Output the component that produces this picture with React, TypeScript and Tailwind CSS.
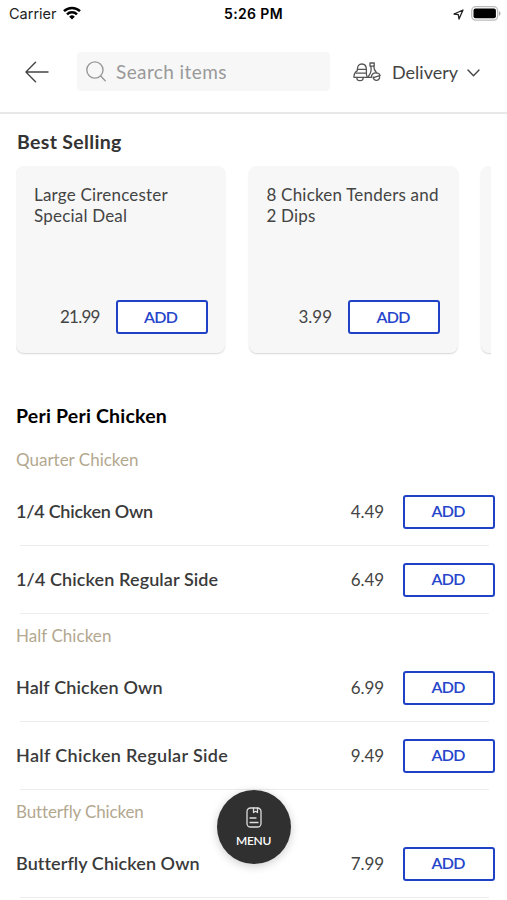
import { useState } from 'react';
import clsx from 'clsx';

// Define Menu Types
interface Item {
  name: string;
  price: string;
  nameClass: string;
}

interface Section {
  title: string;
  titleClass: string;
  items: Item[];
}

const bestSelling = [
  { lines: ['Large Cirencester', 'Special Deal'], price: '21.99', priceClass: 'tracking-[-0.8px]' },
  { lines: ['8 Chicken Tenders and', '2 Dips'], price: '3.99', priceClass: '' },
];

const sections: Section[] = [
  {
    title: 'Quarter Chicken',
    titleClass: '',
    items: [
      { name: '1/4 Chicken Own', price: '4.49', nameClass: 'tracking-[-0.25px]' },
      { name: '1/4 Chicken Regular Side', price: '6.49', nameClass: 'tracking-[0.1px]' },
    ],
  },
  {
    title: 'Half Chicken',
    titleClass: 'tracking-[0.05px]',
    items: [
      { name: 'Half Chicken Own', price: '6.99', nameClass: 'tracking-[0.13px]' },
      { name: 'Half Chicken Regular Side', price: '9.49', nameClass: 'tracking-[0.34px]' },
    ],
  },
  {
    title: 'Butterfly Chicken',
    titleClass: 'tracking-[-0.13px]',
    items: [{ name: 'Butterfly Chicken Own', price: '7.99', nameClass: 'tracking-[0.07px]' }],
  },
];

function AddButton() {
  return (
    <button className="h-[34px] w-[92px] shrink-0 rounded-[3px] border-2 border-[#1f41c6] bg-white pb-px pr-[2px] text-[16px] font-semibold leading-none tracking-[-0.7px] text-[#2545cb]">
      ADD
    </button>
  );
}

function StatusBar() {
  return (
    <div className="grid h-7 grid-cols-3 items-center pl-[9px] pr-[7px] font-['Inter',sans-serif] text-black">
      <div className="flex items-center gap-[6px]">
        <span className="text-[14.5px] leading-none text-[#222]">Carrier</span>
        <svg className="mb-[2px]" width="18" height="14" viewBox="0 0 18 14" fill="none" stroke="#000" strokeWidth="2.5">
          <path d="M1 5.2a11.4 11.4 0 0 1 16 0" />
          <path d="M4 8.4a7.1 7.1 0 0 1 10 0" />
          <path d="M9 13.6 6.2 10.7a4 4 0 0 1 5.6 0Z" fill="#000" stroke="none" />
        </svg>
      </div>
      <span className="mr-[2px] whitespace-nowrap text-center text-[14px] font-semibold leading-none tracking-[0.35px]">5:26 PM</span>
      <div className="flex items-center justify-end gap-[7px]">
        <svg width="11" height="11" viewBox="0 0 11 11" fill="none" stroke="#222" strokeWidth="1.3" strokeLinejoin="round">
          <path d="M10 1 1 5l4.3.7L6 10Z" />
        </svg>
        <svg className="-mr-px mb-px" width="30" height="15" viewBox="0 0 30 15">
          <rect x=".7" y=".7" width="26" height="13.4" rx="4" fill="#fff" stroke="#bbb" strokeWidth="1.3" />
          <rect x="2.5" y="2.5" width="22.4" height="9.8" rx="2" fill="#000" />
          <path d="M28 5v5c2-1 2-4 0-5Z" fill="#aaa" />
        </svg>
      </div>
    </div>
  );
}

function ScooterIcon() {
  return (
    <svg width="28" height="20" viewBox="0 0 28 20" fill="none" stroke="#555" strokeWidth="1.3" strokeLinejoin="round" strokeLinecap="round">
      <path d="M4.4 7.6c0-3.7 1.6-5.6 4.4-5.6s4.6 1.9 4.6 5.6v3.6H3.2" />
      <path d="M4.4 7.4h9" />
      <path d="M4.4 8.6C2 10 .9 12.2.9 15.3H18.3" />
      <path d="M3.8 15.5a3.2 3.2 0 0 0 6.4 0" />
      <path d="M13.4 11.2c0 2.3.5 4.1 2 4.1" />
      <path d="M17 1h4.2v3.2H17Z" />
      <path d="M17.8 4.2c.7 3.6.3 6.3-1.3 8.5-.8 1-1.2 1.8-1.1 2.6M20.8 4.2c-.1 3.2 1 4.6 2.7 6.5" />
      <path d="M18.3 15.3c.3-3 2.5-4.7 5.2-4.5 1.8.1 3.1 1 3.7 2.6l-6.7 2.3" />
      <path d="M20.2 15a3.2 3.2 0 1 0 6.2-.9" />
    </svg>
  );
}

export default function App() {
  const [query, setQuery] = useState('');

  return (
    <div className="relative h-[900px] w-[507px] overflow-hidden bg-white font-['Lato',sans-serif] text-[#444]">
      <StatusBar />

      {/* Header */}
      <header className="flex h-[86px] items-center border-b-2 border-[#e8e8e8] pl-[25px] pt-[3px]">
        <svg className="shrink-0" width="24" height="22" viewBox="0 0 24 22" fill="none" stroke="#444" strokeWidth="1.4" strokeLinecap="round">
          <path d="M23 11H1M10.5 1.3.9 11l9.6 9.7" />
        </svg>
        <label className="ml-7 flex h-[39px] w-[253px] items-center gap-[10px] rounded-[4px] bg-[#f7f7f7] pl-[9px]">
          <svg className="shrink-0" width="20" height="21" viewBox="0 0 20 21" fill="none" stroke="#999" strokeWidth="1.4" strokeLinecap="round">
            <circle cx="8.9" cy="9" r="8.1" />
            <path d="m14.7 15 4.5 4.8" />
          </svg>
          <input
            className="w-[190px] bg-transparent text-[19px] leading-none tracking-[0.4px] text-[#666] outline-none placeholder:text-[#999]"
            placeholder="Search items"
            value={query}
            onChange={(e) => setQuery(e.target.value)}
          />
        </label>
        <button className="ml-[23px] flex items-center">
          <ScooterIcon />
          <span className="ml-[11px] w-[66px] whitespace-nowrap text-left text-[18px] leading-none">Delivery</span>
          <svg className="ml-[9px] mt-[3px]" width="13" height="8" viewBox="0 0 13 8" fill="none" stroke="#444" strokeWidth="1.4" strokeLinecap="round">
            <path d="m1 1 5.5 5.8L12 1" />
          </svg>
        </button>
      </header>

      {/* Best Selling */}
      <section className="h-[277px] px-4 pt-4">
        <h2 className="h-9 pl-px text-[19.5px] font-bold leading-6 tracking-[0.33px] text-[#333]">Best Selling</h2>
        <div className="flex gap-[23.5px] overflow-hidden pb-2">
          {bestSelling.map((deal) => (
            <div key={deal.price} className="flex h-[187px] w-[209px] shrink-0 flex-col justify-between rounded-[8px] bg-[#f7f7f7] pb-[19px] pl-[18px] pr-[17.5px] pt-[18px] shadow-[0_1px_1.5px_rgba(0,0,0,0.16)]">
              <p className="whitespace-nowrap text-[17px] leading-[21px] tracking-[0.2px]">
                {deal.lines[0]}
                <br />
                {deal.lines[1]}
              </p>
              <div className="flex items-center justify-end gap-4">
                <span className={clsx('text-[17px]', deal.priceClass)}>{deal.price}</span>
                <AddButton />
              </div>
            </div>
          ))}
          <div className="h-[187px] w-[209px] shrink-0 rounded-[8px] bg-[#f7f7f7] shadow-[0_1px_1.5px_rgba(0,0,0,0.16)]" />
        </div>
      </section>

      {/* Menu list */}
      <section>
        <h2 className="h-[47px] pl-4 pt-[13px] text-[19.5px] font-bold leading-6 tracking-[0.2px] text-black">Peri Peri Chicken</h2>
        {sections.map((section) => (
          <div key={section.title}>
            <h3 className={clsx('h-10 pl-4 pt-[10px] text-[17px] leading-6 text-[#b3a88f]', section.titleClass)}>{section.title}</h3>
            {section.items.map((item) => (
              <div key={item.name}>
                <div className="flex h-[67px] items-center pl-4 pr-[12px]">
                  <span className={clsx('flex-1 whitespace-nowrap pb-px text-[18px] font-semibold text-[#3a3a3a]', item.nameClass)}>{item.name}</span>
                  <span className="mr-[19px] text-[17px] tracking-[-0.1px]">{item.price}</span>
                  <AddButton />
                </div>
                <div className="ml-5 mr-[18px] h-px bg-[#ededed]" />
              </div>
            ))}
          </div>
        ))}
      </section>

      {/* Floating menu button */}
      <button className="absolute left-[217px] top-[790px] flex h-[74px] w-[74px] flex-col items-center rounded-full bg-[#303030] pr-px pt-[17px] text-white shadow-[0_2px_10px_rgba(0,0,0,0.2)]">
        <svg width="16" height="21" viewBox="0 0 16 21" fill="none" stroke="#ddd" strokeWidth="1.3" strokeLinecap="round" strokeLinejoin="round">
          <rect x="1" y="1" width="14" height="19" rx="3.5" />
          <path d="M7.5 1v4.5l2-1.2 2 1.2V1M4 11h6M4 15.5h8" />
        </svg>
        <span className="mt-[7px] text-[12px] font-semibold leading-none tracking-[-0.3px]">MENU</span>
      </button>
    </div>
  );
}
